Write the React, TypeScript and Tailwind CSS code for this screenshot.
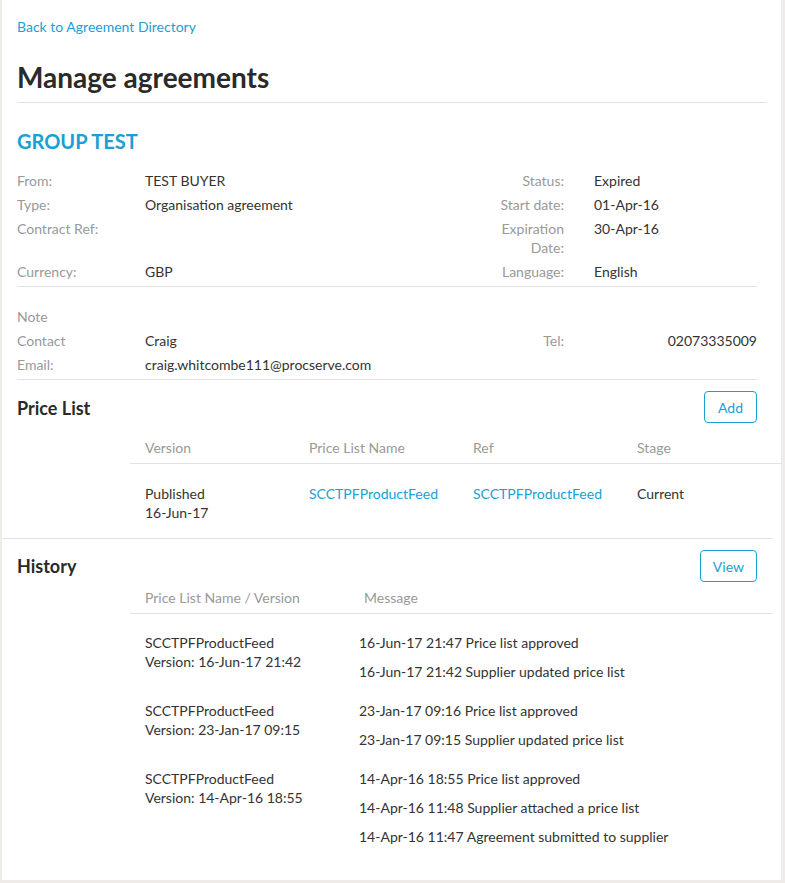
import React from 'react';

const blue = 'text-[#1aa0d2]';

const details = [
  { label: 'From:', value: 'TEST BUYER', rLabel: 'Status:', rValue: 'Expired' },
  { label: 'Type:', value: 'Organisation agreement', rLabel: 'Start date:', rValue: '01-Apr-16' },
  { label: 'Contract Ref:', value: '', rLabel: 'Expiration Date:', rValue: '30-Apr-16' },
  { label: 'Currency:', value: 'GBP', rLabel: 'Language:', rValue: 'English' },
];

const history = [
  {
    name: 'SCCTPFProductFeed',
    version: 'Version: 16-Jun-17 21:42',
    messages: ['16-Jun-17 21:47 Price list approved', '16-Jun-17 21:42 Supplier updated price list'],
  },
  {
    name: 'SCCTPFProductFeed',
    version: 'Version: 23-Jan-17 09:15',
    messages: ['23-Jan-17 09:16 Price list approved', '23-Jan-17 09:15 Supplier updated price list'],
  },
  {
    name: 'SCCTPFProductFeed',
    version: 'Version: 14-Apr-16 18:55',
    messages: [
      '14-Apr-16 18:55 Price list approved',
      '14-Apr-16 11:48 Supplier attached a price list',
      '14-Apr-16 11:47 Agreement submitted to supplier',
    ],
  },
];

export default function App() {
  return (
    <div className="min-h-screen bg-[#eeebe8] pl-[2px] pr-[4px] pb-[3px] font-['Lato',sans-serif] text-[14px] text-[#333]">
      <div className="bg-white pt-[17px] pb-[24px]">
        {/* Header */}
        <div className="pl-[15px] pr-[14px]">
          <a className={`block leading-5 ${blue}`} href="#">
            Back to Agreement Directory
          </a>
          <h1 className="mt-[22px] text-[28px] font-bold leading-[36px] text-[#2a2a2a]">Manage agreements</h1>
          <div className="mt-[7px] border-t border-[#e2e2e2]" />
          <h2 className={`mt-[25px] text-[20px] font-bold leading-[26px] ${blue}`}>GROUP TEST</h2>
        </div>

        {/* Agreement details */}
        <div className="ml-[15px] mr-[24px] mt-[14px] border-b border-[#e2e2e2] pb-[3px]">
          {details.map((d) => (
            <div key={d.label} className="grid grid-cols-[128px_1fr_100px_163px] py-[2.5px] leading-[19px]">
              <div className="text-[#999]">{d.label}</div>
              <div>{d.value}</div>
              <div className="pr-[30px] text-right text-[#999]">{d.rLabel}</div>
              <div>{d.rValue}</div>
            </div>
          ))}
        </div>

        {/* Contact */}
        <div className="ml-[15px] mr-[24px] border-b border-[#e2e2e2] pt-[17px] pb-[3px]">
          <div className="py-[2.5px] leading-[19px] text-[#999]">Note</div>
          <div className="grid grid-cols-[128px_1fr_100px_163px] py-[2.5px] leading-[19px]">
            <div className="text-[#999]">Contact</div>
            <div>Craig</div>
            <div className="pr-[30px] text-right text-[#999]">Tel:</div>
            <div className="text-right">02073335009</div>
          </div>
          <div className="grid grid-cols-[128px_1fr] py-[2.5px] leading-[19px]">
            <div className="text-[#999]">Email:</div>
            <div>craig.whitcombe111@procserve.com</div>
          </div>
        </div>

        {/* Price list */}
        <div className="mr-[9px] border-b border-[#e2e2e2] pb-[16px]">
          <div className="flex items-center justify-between pl-[15px] pr-[15px] pt-[11px]">
            <h3 className="pt-[3px] text-[18px] font-bold text-[#2a2a2a]">Price List</h3>
            <button className={`h-8 rounded border border-[#1aa0d2] bg-white px-[13px] ${blue}`}>Add</button>
          </div>
          <div className="ml-[128px] mr-[-10px] mt-[15px]">
            <div className="grid grid-cols-[164px_164px_164px_1fr] border-b border-[#e2e2e2] pb-[5px] leading-5 text-[#999]">
              <div className="pl-[15px]">Version</div>
              <div className="pl-[15px]">Price List Name</div>
              <div className="pl-[15px]">Ref</div>
              <div className="pl-[15px]">Stage</div>
            </div>
            <div className="grid grid-cols-[164px_164px_164px_1fr] pt-[20px] leading-[19px]">
              <div className="pl-[15px]">
                Published
                <br />
                16-Jun-17
              </div>
              <div className={`pl-[15px] ${blue}`}>SCCTPFProductFeed</div>
              <div className={`pl-[15px] ${blue}`}>SCCTPFProductFeed</div>
              <div className="pl-[15px]">Current</div>
            </div>
          </div>
        </div>

        {/* History */}
        <div className="mr-[9px]">
          <div className="flex items-center justify-between pl-[15px] pr-[15px] pt-[11px]">
            <h3 className="text-[18px] font-bold text-[#2a2a2a]">History</h3>
            <button className={`h-8 rounded border border-[#1aa0d2] bg-white px-[12px] ${blue}`}>View</button>
          </div>
          <div className="ml-[128px] mt-[6px]">
            <div className="grid grid-cols-[214px_1fr] border-b border-[#e2e2e2] pb-[5px] leading-5 text-[#999]">
              <div className="pl-[15px]">Price List Name / Version</div>
              <div className="pl-[20px]">Message</div>
            </div>
            <div className="pt-[9px]">
              {history.map((h) => (
                <div key={h.version} className="grid grid-cols-[214px_1fr] pt-[10px] leading-[19px]">
                  <div className="pl-[15px]">
                    {h.name}
                    <br />
                    {h.version}
                  </div>
                  <div className="pl-[15px]">
                    {h.messages.map((m) => (
                      <p key={m} className="mb-[10px]">
                        {m}
                      </p>
                    ))}
                  </div>
                </div>
              ))}
            </div>
          </div>
        </div>
      </div>
    </div>
  );
}
